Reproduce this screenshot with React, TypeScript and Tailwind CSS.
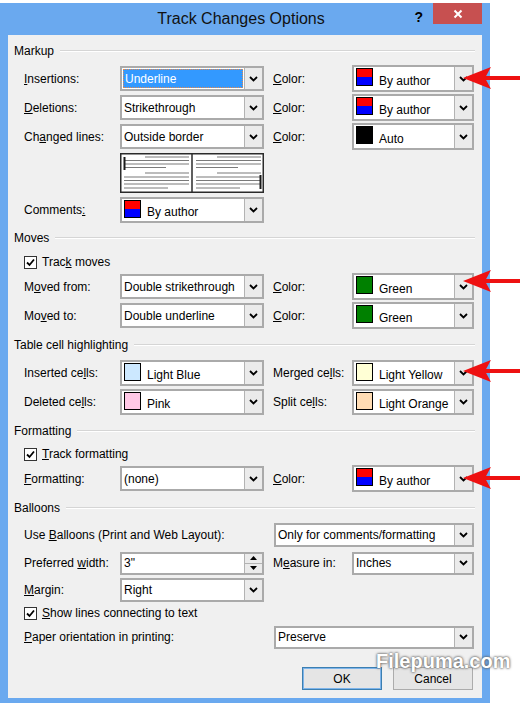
import clsx from "clsx";
import type { ReactNode } from "react";

function Chevron() {
  return (
    <svg width="9" height="6" viewBox="0 0 9 6">
      <path d="M1 1 L4.5 4.5 L8 1" fill="none" stroke="#000" strokeWidth="1.8" />
    </svg>
  );
}

function DropBtn() {
  return (
    <div className="flex w-[18px] shrink-0 items-center justify-center self-stretch border-l border-[#b3b3b3] bg-[#ebebeb]">
      <Chevron />
    </div>
  );
}

function Combo({ className, children, inner }: { className: string; children: ReactNode; inner?: string }) {
  return (
    <div className={clsx("flex shrink-0 border-2 border-[#aaaaaa] bg-white", className)}>
      <div className={clsx("flex min-w-0 flex-1", inner ?? "items-center pl-[2px]")}>{children}</div>
      <DropBtn />
    </div>
  );
}

function Swatch({ color }: { color: string }) {
  if (color === "author") {
    return (
      <div className="flex h-[18px] w-[17px] shrink-0 flex-col border border-black">
        <div className="flex-1 bg-[#ff0000]" />
        <div className="flex-1 bg-[#0000ff]" />
      </div>
    );
  }
  return <div className={clsx("h-[18px] w-[17px] shrink-0 border border-black", color)} />;
}

// colour combo: swatch top-left, text sits lower
function ColorCombo({ className, color, text }: { className: string; color: string; text: string }) {
  return (
    <Combo className={className} inner="items-start pl-[2px] pt-[1px]">
      <Swatch color={color} />
      <span className="ml-[6px] self-end pb-[2px] leading-[14px]">{text}</span>
    </Combo>
  );
}

function Check() {
  return (
    <div className="flex h-[13px] w-[13px] shrink-0 items-center justify-center border border-[#333] bg-white">
      <svg width="9" height="9" viewBox="0 0 9 9">
        <path d="M1 4.5 L3.5 7 L8 1.5" fill="none" stroke="#000" strokeWidth="1.8" />
      </svg>
    </div>
  );
}

function Section({ title, className }: { title: string; className: string }) {
  return (
    <div className={clsx("flex h-[16px] items-center gap-[6px] pl-[6px] pr-[7px]", className)}>
      <span>{title}</span>
      <div className="h-[2px] flex-1 border-t border-b border-t-[#d5d5d5] border-b-white" />
    </div>
  );
}

function Row({ className, children }: { className?: string; children: ReactNode }) {
  return <div className={clsx("flex items-center pl-[16px]", className ?? "h-[29px]")}>{children}</div>;
}

function Preview() {
  const left = [
    [4, 25, 69],
    [7.5, 4, 69],
    [11, 4, 69],
    [14.5, 4, 46],
    [20, 25, 69],
    [24, 4, 69],
    [27.5, 4, 69],
    [31, 4, 69],
    [35, 4, 48],
  ];
  return (
    <div className="ml-[112px] mt-[2px] h-[40px] w-[144px]">
      <svg width="144" height="40" viewBox="0 0 144 40">
        <rect x="0.75" y="0.75" width="142.5" height="38.5" fill="#fff" stroke="#2b2b2b" strokeWidth="1.5" />
        <line x1="72" y1="0" x2="72" y2="40" stroke="#2b2b2b" strokeWidth="1.5" />
        {left.map(([y, a, b], i) => (
          <g key={i}>
            <line x1={a} y1={y} x2={b} y2={y} stroke="#7a7a7a" strokeWidth="1.2" />
            <line x1={a + 72} y1={y} x2={b + 72} y2={y} stroke="#7a7a7a" strokeWidth="1.2" />
          </g>
        ))}
        <line x1="4.5" y1="4" x2="4.5" y2="17" stroke="#1a1a1a" strokeWidth="2" />
        <line x1="140.5" y1="22" x2="140.5" y2="36" stroke="#1a1a1a" strokeWidth="2" />
      </svg>
    </div>
  );
}

function Spin() {
  return (
    <div className="flex h-[23px] w-[144px] shrink-0 border-2 border-[#aaaaaa] bg-white">
      <div className="flex flex-1 items-center pl-[2px]">3"</div>
      <div className="flex w-[18px] flex-col border-l border-[#b3b3b3] bg-[#ebebeb]">
        <div className="flex flex-1 items-center justify-center border-b border-[#b3b3b3]">
          <svg width="7" height="4" viewBox="0 0 7 4">
            <path d="M0 4 L3.5 0 L7 4 Z" fill="#000" />
          </svg>
        </div>
        <div className="flex flex-1 items-center justify-center">
          <svg width="7" height="4" viewBox="0 0 7 4">
            <path d="M0 0 L3.5 4 L7 0 Z" fill="#000" />
          </svg>
        </div>
      </div>
    </div>
  );
}

function Arrow({ y }: { y: number }) {
  return (
    <g>
      <polygon points={`463,${y} 491,${y - 11} 485,${y} 491,${y + 11}`} fill="#ee1111" />
      <rect x="484" y={y - 2} width="36" height="4" fill="#ee1111" />
    </g>
  );
}

export default function App() {
  return (
    <div className="relative h-[703px] w-[520px] overflow-hidden bg-white font-['Liberation_Sans',Arial,sans-serif] text-[12px] text-black">
      <div className="mt-[3px] flex h-[700px] w-[490px] flex-col bg-[#6aa9ef]">
        {/* title bar */}
        <div className="grid h-[32px] grid-cols-[1fr_auto_1fr] pr-[8px]">
          <div />
          <div className="flex items-center text-[16px] text-[#111]">Track Changes Options</div>
          <div className="flex items-start justify-end">
            <span className="mr-[10px] mt-[6px] text-[14px] font-bold leading-[16px]">?</span>
            <div className="flex h-[21px] w-[49px] items-center justify-center bg-[#c75050]">
              <svg width="10" height="10" viewBox="0 0 10 10">
                <path d="M1.5 1.5 L8.5 8.5 M8.5 1.5 L1.5 8.5" stroke="#fff" strokeWidth="2" />
              </svg>
            </div>
          </div>
        </div>

        {/* client area */}
        <div className="mx-[8px] flex h-[663px] flex-col bg-[#f0f0f0] pt-[8px]">
          <Section title="Markup" className="" />
          <Row className="mt-[5px] h-[29px]">
            <div className="w-[96px]"><u>I</u>nsertions:</div>
            <Combo className="h-[25px] w-[144px]" inner="items-stretch p-[1px]">
              <div className="flex flex-1 items-center border border-dotted border-[#e7894a] bg-[#3399ff] px-[1px] text-white">
                Underline
              </div>
            </Combo>
            <div className="ml-[9px] w-[79px]"><u>C</u>olor:</div>
            <ColorCombo className="h-[27px] w-[122px]" color="author" text="By author" />
          </Row>
          <Row>
            <div className="w-[96px]"><u>D</u>eletions:</div>
            <Combo className="h-[25px] w-[144px]">Strikethrough</Combo>
            <div className="ml-[9px] w-[79px]"><u>C</u>olor:</div>
            <ColorCombo className="h-[27px] w-[122px]" color="author" text="By author" />
          </Row>
          <Row>
            <div className="w-[96px]">
              Ch<u>a</u>nged lines:
            </div>
            <Combo className="h-[25px] w-[144px]">Outside border</Combo>
            <div className="ml-[9px] w-[79px]"><u>C</u>olor:</div>
            <ColorCombo className="h-[27px] w-[122px]" color="bg-black" text="Auto" />
          </Row>
          <Preview />
          <Row className="mt-[2px] h-[29px]">
            <div className="w-[96px]">
              Comments<u>:</u>
            </div>
            <ColorCombo className="h-[26px] w-[144px]" color="author" text="By author" />
          </Row>

          <Section title="Moves" className="mt-[6px]" />
          <Row className="mt-[6px] h-[20px]">
            <Check />
            <span className="ml-[5px]">
              Trac<u>k</u> moves
            </span>
          </Row>
          <Row>
            <div className="w-[96px]">
              M<u>o</u>ved from:
            </div>
            <Combo className="h-[25px] w-[144px]">Double strikethrough</Combo>
            <div className="ml-[9px] w-[79px]"><u>C</u>olor:</div>
            <ColorCombo className="h-[27px] w-[122px]" color="bg-[#008000]" text="Green" />
          </Row>
          <Row>
            <div className="w-[96px]">
              Mo<u>v</u>ed to:
            </div>
            <Combo className="h-[25px] w-[144px]">Double underline</Combo>
            <div className="ml-[9px] w-[79px]"><u>C</u>olor:</div>
            <ColorCombo className="h-[27px] w-[122px]" color="bg-[#008000]" text="Green" />
          </Row>

          <Section title="Table cell highlighting" className="mt-[7px]" />
          <Row className="mt-[5px] h-[29px]">
            <div className="w-[96px]">
              Inserted ce<u>l</u>ls:
            </div>
            <ColorCombo className="h-[26px] w-[144px]" color="bg-[#cce8ff]" text="Light Blue" />
            <div className="ml-[9px] w-[79px]">
              Merged ce<u>l</u>ls:
            </div>
            <ColorCombo className="h-[26px] w-[122px]" color="bg-[#ffffd5]" text="Light Yellow" />
          </Row>
          <Row>
            <div className="w-[96px]">
              Deleted ce<u>l</u>ls:
            </div>
            <ColorCombo className="h-[26px] w-[144px]" color="bg-[#ffc8e6]" text="Pink" />
            <div className="ml-[9px] w-[79px]">
              Split ce<u>l</u>ls:
            </div>
            <ColorCombo className="h-[26px] w-[122px]" color="bg-[#ffdcb4]" text="Light Orange" />
          </Row>

          <Section title="Formatting" className="mt-[7px]" />
          <Row className="mt-[5px] h-[20px]">
            <Check />
            <span className="ml-[5px]">
              <u>T</u>rack formatting
            </span>
          </Row>
          <Row>
            <div className="w-[96px]">
              <u>F</u>ormatting:
            </div>
            <Combo className="h-[25px] w-[144px]">(none)</Combo>
            <div className="ml-[9px] w-[79px]"><u>C</u>olor:</div>
            <ColorCombo className="h-[27px] w-[122px]" color="author" text="By author" />
          </Row>

          <Section title="Balloons" className="mt-[7px]" />
          <Row className="mt-[4px] h-[29px]">
            <div className="w-[250px]">
              Use <u>B</u>alloons (Print and Web Layout):
            </div>
            <Combo className="h-[24px] w-[200px]">Only for comments/formatting</Combo>
          </Row>
          <Row className="h-[28px]">
            <div className="w-[96px]">
              Preferred <u>w</u>idth:
            </div>
            <Spin />
            <div className="ml-[9px] w-[79px]">
              M<u>e</u>asure in:
            </div>
            <Combo className="h-[23px] w-[122px]">Inches</Combo>
          </Row>
          <Row className="h-[25px]">
            <div className="w-[96px]">
              <u>M</u>argin:
            </div>
            <Combo className="h-[24px] w-[144px]">Right</Combo>
          </Row>
          <Row className="h-[22px]">
            <Check />
            <span className="ml-[5px]">
              <u>S</u>how lines connecting to text
            </span>
          </Row>
          <Row className="h-[26px]">
            <div className="w-[250px]">
              <u>P</u>aper orientation in printing:
            </div>
            <Combo className="h-[23px] w-[200px]">Preserve</Combo>
          </Row>

          <div className="mt-[17px] flex justify-end gap-[11px] pr-[9px]">
            <button className="flex h-[23px] w-[80px] items-center justify-center border border-[#3c7fb1] bg-[#e5e5e5] shadow-[inset_0_0_0_1px_#7eb4ea]">
              OK
            </button>
            <button className="flex h-[23px] w-[80px] items-center justify-center border border-[#acacac] bg-[#e5e5e5]">
              Cancel
            </button>
          </div>
        </div>
      </div>

      {/* watermark */}
      <div className="pointer-events-none absolute left-[376px] top-[646px] text-[20px] font-bold text-white [text-shadow:0_0_3px_#555,0_0_2px_#777]">
        Filepuma.com
      </div>

      {/* red arrows */}
      <svg className="pointer-events-none absolute left-0 top-0" width="520" height="703" viewBox="0 0 520 703">
        <Arrow y={78} />
        <Arrow y={281} />
        <Arrow y={371} />
        <Arrow y={478} />
      </svg>
    </div>
  );
}
